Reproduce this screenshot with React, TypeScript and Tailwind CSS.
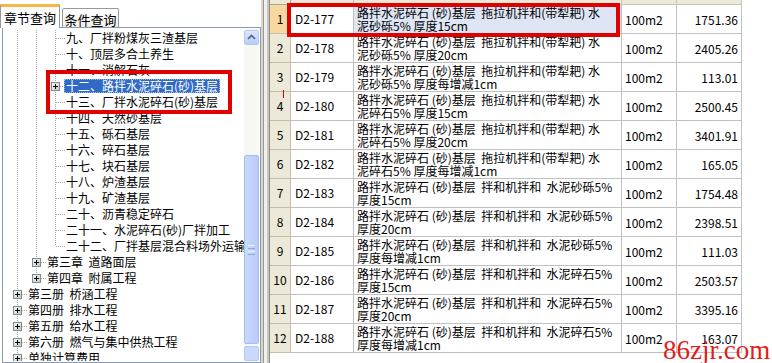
import React from "react";

type TreeRow = { d: number; t: string; plus?: boolean; sel?: boolean; last?: boolean };

const tree: TreeRow[] = [
  { d: 3, t: "九、厂拌粉煤灰三渣基层" },
  { d: 3, t: "十、顶层多合土养生" },
  { d: 3, t: "十一、消解石灰" },
  { d: 3, t: "十二、路拌水泥碎石(砂)基层", plus: true, sel: true },
  { d: 3, t: "十三、厂拌水泥碎石(砂)基层" },
  { d: 3, t: "十四、天然砂基层" },
  { d: 3, t: "十五、砾石基层" },
  { d: 3, t: "十六、碎石基层" },
  { d: 3, t: "十七、块石基层" },
  { d: 3, t: "十八、炉渣基层" },
  { d: 3, t: "十九、矿渣基层" },
  { d: 3, t: "二十、沥青稳定碎石" },
  { d: 3, t: "二十一、水泥碎石(砂)厂拌加工" },
  { d: 3, t: "二十二、厂拌基层混合料场外运输", last: true },
  { d: 2, t: "第三章  道路面层", plus: true },
  { d: 2, t: "第四章  附属工程", plus: true, last: true },
  { d: 1, t: "第三册  桥涵工程", plus: true },
  { d: 1, t: "第四册  排水工程", plus: true },
  { d: 1, t: "第五册  给水工程", plus: true },
  { d: 1, t: "第六册  燃气与集中供热工程", plus: true },
  { d: 1, t: "单独计算费用", plus: true },
];

type TRow = { n: number; code: string; l1: string; l2: string; price: string };

const A = "路拌水泥碎石 (砂)基层  拖拉机拌和(带犁耙) 水";
const B = "路拌水泥碎石 (砂)基层  拌和机拌和  水泥砂砾5%";
const C = "路拌水泥碎石 (砂)基层  拌和机拌和  水泥碎石5%";

const rows: TRow[] = [
  { n: 1, code: "D2-177", l1: A, l2: "泥砂砾5% 厚度15cm", price: "1751.36" },
  { n: 2, code: "D2-178", l1: A, l2: "泥砂砾5% 厚度20cm", price: "2405.26" },
  { n: 3, code: "D2-179", l1: A, l2: "泥砂砾5% 厚度每增减1cm", price: "113.01" },
  { n: 4, code: "D2-180", l1: A, l2: "泥碎石5% 厚度15cm", price: "2500.45" },
  { n: 5, code: "D2-181", l1: A, l2: "泥碎石5% 厚度20cm", price: "3401.91" },
  { n: 6, code: "D2-182", l1: A, l2: "泥碎石5% 厚度每增减1cm", price: "165.05" },
  { n: 7, code: "D2-183", l1: B, l2: "厚度15cm", price: "1754.48" },
  { n: 8, code: "D2-184", l1: B, l2: "厚度20cm", price: "2398.51" },
  { n: 9, code: "D2-185", l1: B, l2: "厚度每增减1cm", price: "111.03" },
  { n: 10, code: "D2-186", l1: C, l2: "厚度15cm", price: "2503.57" },
  { n: 11, code: "D2-187", l1: C, l2: "厚度20cm", price: "3395.16" },
  { n: 12, code: "D2-188", l1: C, l2: "厚度每增减1cm", price: "163.07" },
];

const DOT = "#a7a7a7";

function VLine() {
  return (
    <svg width="19" height="16" className="block shrink-0">
      <line x1="9.5" y1="0" x2="9.5" y2="16" stroke={DOT} strokeDasharray="1 1" shapeRendering="crispEdges" />
    </svg>
  );
}

function Connector({ last, plus }: { last?: boolean; plus?: boolean }) {
  return (
    <svg width="19" height="16" className="block shrink-0">
      <line x1="9.5" y1="0" x2="9.5" y2={last ? 8 : 16} stroke={DOT} strokeDasharray="1 1" shapeRendering="crispEdges" />
      <line x1="10" y1="8.5" x2="19" y2="8.5" stroke={DOT} strokeDasharray="1 1" shapeRendering="crispEdges" />
      {plus && (
        <g shapeRendering="crispEdges">
          <defs>
            <linearGradient id="pg" x1="0" y1="0" x2="1" y2="1">
              <stop offset="0" stopColor="#ffffff" />
              <stop offset="1" stopColor="#c6c2b2" />
            </linearGradient>
          </defs>
          <rect x="5.5" y="4.5" width="8" height="8" fill="url(#pg)" stroke="#7c8b9a" />
          <line x1="7" y1="8.5" x2="12" y2="8.5" stroke="#000" />
          <line x1="9.5" y1="6" x2="9.5" y2="11" stroke="#000" />
        </g>
      )}
    </svg>
  );
}

function TreeItem({ r }: { r: TreeRow }) {
  const cells: React.ReactNode[] = [];
  for (let i = 1; i < r.d; i++) cells.push(<VLine key={i} />);
  cells.push(<Connector key="c" last={r.last} plus={r.plus} />);
  return (
    <div className="flex h-[16px] items-center whitespace-nowrap">
      {cells}
      {r.sel ? (
        <span className="ml-[-1px] h-[14px] bg-[#316ac5] px-[2px] text-[12px] leading-[14px] text-white outline outline-1 -outline-offset-1 outline-dotted outline-[#9fb8e6]">
          {r.t}
        </span>
      ) : (
        <span className="px-[1px] text-[12px] leading-[16px] whitespace-pre">{r.t}</span>
      )}
    </div>
  );
}

function ScrollBar() {
  return (
    <div className="flex w-[15px] shrink-0 flex-col bg-[#f7f7f3]">
      <div className="mt-[1px] flex h-[15px] items-center justify-center rounded-[2px] border border-[#b7c9f2] bg-gradient-to-b from-[#dbe5fd] to-[#b9cdf8]">
        <svg width="9" height="6" viewBox="0 0 9 6">
          <path d="M1 5 L4.5 1.5 L8 5" stroke="#4d6185" strokeWidth="1.6" fill="none" />
        </svg>
      </div>
      <div className="h-[115px]" />
      <div className="flex h-[196px] flex-col items-center justify-center gap-[2px] rounded-[2px] border border-[#a6bdf0] bg-gradient-to-r from-[#c9d8fd] to-[#b8ccf8]">
        <div className="h-px w-[7px] bg-[#eef3fe]" />
        <div className="h-px w-[7px] bg-[#8ca5dc]" />
        <div className="h-px w-[7px] bg-[#eef3fe]" />
        <div className="h-px w-[7px] bg-[#8ca5dc]" />
      </div>
      <div className="mt-[2px] h-[15px] rounded-[2px] border border-[#b7c9f2] bg-[#c9d8fd]" />
    </div>
  );
}

const GRID = "grid grid-cols-[21px_63px_268px_55px_65px] w-[472px]";

export default function App() {
  return (
    <div className="relative flex h-[363px] w-[772px] overflow-hidden bg-white font-['Noto_Sans_CJK_SC',sans-serif] text-[12px] text-black">
      {/* Left pane */}
      <div className="flex w-[261px] shrink-0 flex-col">
        <div className="flex h-[27px] items-end pl-[0px]">
          <div className="relative z-10 mb-[-1px] flex h-[24px] w-[60px] items-start justify-center border-x border-t-[3px] border-x-[#919b9c] border-t-[#f5b846] bg-white pt-[3px] text-[13px] leading-[15px]">
            章节查询
          </div>
          <div className="ml-[2px] flex h-[19px] w-[57px] items-center justify-center rounded-t-[2px] border-x border-t border-[#919b9c] bg-gradient-to-b from-white to-[#f0efe8] pt-[2px] text-[13px] leading-[15px]">
            条件查询
          </div>
        </div>
        <div className="ml-[2px] flex h-[336px] w-[259px] border border-[#8a9bb0] bg-white p-[1px]">
          <div className="flex-1 overflow-hidden pl-[4px] pt-[1px]">
            {tree.map((r, i) => (
              <TreeItem key={i} r={r} />
            ))}
          </div>
          <ScrollBar />
        </div>
      </div>

      {/* Splitter */}
      <div className="flex w-[8px] shrink-0 bg-[#f0f0ee]">
        <div className="w-[2px] bg-[#d8d6cc]" />
        <div className="w-[1px] bg-[#9a988c]" />
        <div className="w-[3px]" />
        <div className="w-[2px] bg-[#c8c6bc]" />
      </div>

      {/* Table */}
      <div className="flex flex-1 flex-col border-l border-[#8f8d83]">
        <div className={GRID + " h-[5px]"}>
          <div className="border-r border-b border-[#aca899] bg-[#ece9d8]" />
          <div className="border-r border-b border-[#c8c5b8] bg-[#ece9d8]" />
          <div className="border-r border-b border-[#c8c5b8] bg-[#ece9d8]" />
          <div className="border-r border-b border-[#c8c5b8] bg-[#ece9d8]" />
          <div className="border-r border-b border-[#c8c5b8] bg-[#ece9d8]" />
        </div>
        {rows.map((r) => {
          const first = r.n === 1;
          return (
            <div key={r.n} className={GRID + " h-[29px]"}>
              <div
                className={
                  "flex items-center justify-center border-r border-b border-[#c3bfae] " +
                  (first ? "bg-[#f8d8a0]" : "bg-[#ece9d8]")
                }
              >
                {r.n}
              </div>
              <div className="flex items-center border-r border-b border-[#c0c0c0] pl-[4px]">{r.code}</div>
              <div
                className={
                  "overflow-hidden whitespace-pre border-r border-b border-[#c0c0c0] pl-[3px] pt-[1px] leading-[13px] " +
                  (first ? "bg-[#dee5f4]" : "")
                }
              >
                <div>{r.l1}</div>
                <div>{r.l2}</div>
              </div>
              <div className="flex items-center border-r border-b border-[#c0c0c0] pl-[3px] pt-[2px]">100m2</div>
              <div className="flex items-center justify-end border-r border-b border-[#c0c0c0] pr-[3px] pt-[2px]">
                {r.price}
              </div>
            </div>
          );
        })}
      </div>

      {/* Overlays */}
      <div className="pointer-events-none absolute left-[46px] top-[70px] h-[44px] w-[186px] border-[4px] border-[#e00000]" />
      <div className="pointer-events-none absolute left-[287px] top-[3px] h-[34px] w-[333px] border-[4px] border-[#e00000]" />
      <div className="pointer-events-none absolute left-[283px] top-[90px] h-[8px] w-[1px] bg-[#e00000]" />
      <div className="pointer-events-none absolute left-[663px] top-[337px] font-['Liberation_Serif',serif] text-[27px] leading-[27px] text-[#e41b1b]">
        86zjr.com
      </div>
    </div>
  );
}
